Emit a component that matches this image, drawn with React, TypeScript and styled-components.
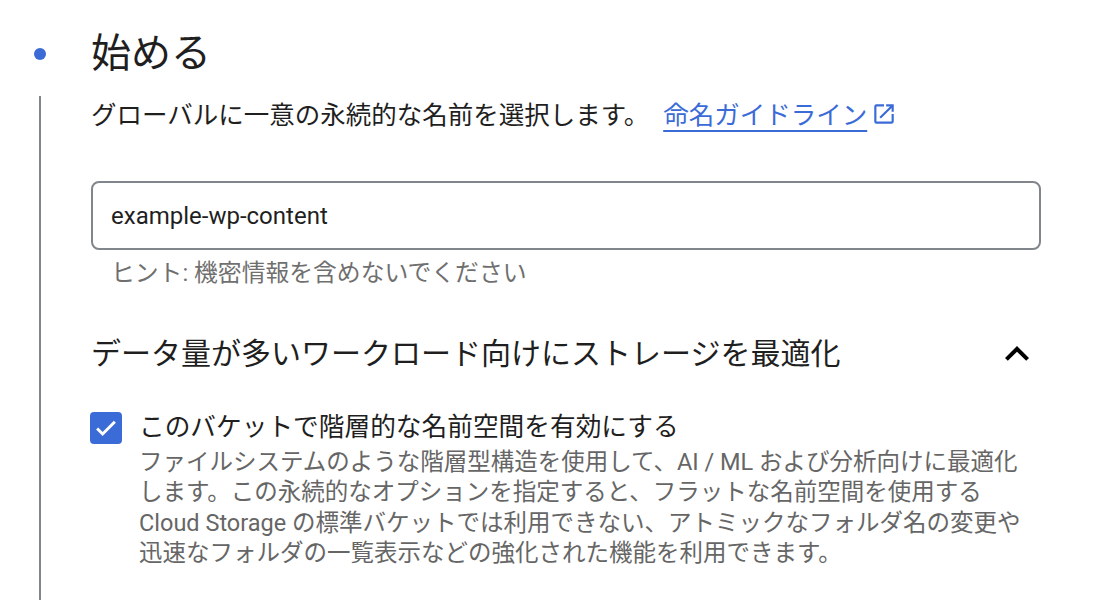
import React from 'react'
import styled, { createGlobalStyle } from 'styled-components'

const GlobalStyle = createGlobalStyle`
  body {
    margin: 0;
    background: #fff;
    font-family: Roboto, "Noto Sans CJK JP", sans-serif;
    color: #1f1f1f;
    overflow: hidden;
  }
`

const App = () => {
  return (
    <>
      <GlobalStyle />
      <Step>
        <Marker>
          <Dot />
        </Marker>
        <Title>始める</Title>
        <RailCell>
          <Rail />
        </RailCell>
        <Content>
          <Desc>
            グローバルに一意の永続的な名前を選択します。
            <GuideLink href="#">
              <LinkText>命名ガイドライン</LinkText>
              <ExternalIcon viewBox="0 0 24 24">
                <path d="M19 19H5V5h7V3H5a2 2 0 0 0-2 2v14a2 2 0 0 0 2 2h14c1.1 0 2-.9 2-2v-7h-2v7zM14 3v2h3.59l-9.830 9.83 1.41 1.41L19 6.41V10h2V3h-7z" />
              </ExternalIcon>
            </GuideLink>
          </Desc>
          <NameInput defaultValue="example-wp-content" />
          <Hint>ヒント: 機密情報を含めないでください</Hint>
          <SectionHeader>
            <SectionTitle>データ量が多いワークロード向けにストレージを最適化</SectionTitle>
            <Chevron viewBox="0 0 24 24">
              <path d="M12 8l-6 6 1.41 1.41L12 10.83l4.59 4.58L18 14z" />
            </Chevron>
          </SectionHeader>
          <CheckRow>
            <Box>
              <svg width="28" height="28" viewBox="0 0 24 24">
                <path d="M4.4 12.4l4.7 4.7L19.6 6.6" fill="none" stroke="#fff" strokeWidth="2.5" />
              </svg>
            </Box>
            <CheckText>
              <CheckLabel>このバケットで階層的な名前空間を有効にする</CheckLabel>
              <CheckDesc>
                ファイルシステムのような階層型構造を使用して、AI / ML および分析向けに最適化
                <br />
                します。この永続的なオプションを指定すると、フラットな名前空間を使用する
                <br />
                Cloud Storage の標準バケットでは利用できない、アトミックなフォルダ名の変更や
                <br />
                迅速なフォルダの一覧表示などの強化された機能を利用できます。
              </CheckDesc>
            </CheckText>
          </CheckRow>
        </Content>
      </Step>
    </>
  )
}

export default App

const Step = styled.section`
  display: grid;
  grid-template-columns: 91px 950px;
  grid-template-rows: auto 1fr;
  height: 100vh;
  overflow: hidden;
`

const Marker = styled.div`
  display: flex;
  align-items: center;
  padding-top: 30px;
  height: 48px;
`

const Dot = styled.div`
  width: 12px;
  height: 12px;
  border-radius: 50%;
  background-color: #3b6bd6;
  margin-left: 34px;
`

const Title = styled.h1`
  margin: 0;
  padding-top: 30px;
  font-size: 40px;
  line-height: 48px;
  font-weight: 400;
  color: #1f1f1f;
`

const RailCell = styled.div`
  padding-top: 18px;
  display: flex;
`

const Rail = styled.div`
  width: 2px;
  margin-left: 39px;
  background-color: #80868b;
`

const Content = styled.div`
  display: flex;
  flex-direction: column;
`

const Desc = styled.p`
  margin: 19px 0 0;
  font-size: 25.5px;
  line-height: 36px;
  color: #1f1f1f;
  white-space: nowrap;
`

const GuideLink = styled.a`
  margin-left: 14px;
  color: #3b6bd6;
  text-decoration: none;
  white-space: nowrap;
`

const LinkText = styled.span`
  text-decoration: underline;
  text-decoration-thickness: 2px;
  text-underline-offset: 6px;
`

const ExternalIcon = styled.svg`
  width: 26px;
  height: 26px;
  fill: #3b6bd6;
  margin-left: 4px;
  vertical-align: -3px;
`

const NameInput = styled.input`
  box-sizing: border-box;
  margin-top: 48px;
  width: 950px;
  height: 69px;
  border: 2px solid #80868b;
  border-radius: 8px;
  padding: 0 18px;
  font-family: Roboto, sans-serif;
  font-size: 24px;
  color: #1f1f1f;
  outline: none;
`

const Hint = styled.div`
  margin-top: 8px;
  padding-left: 20px;
  font-size: 23.8px;
  line-height: 30px;
  color: #6f6f6f;
`

const SectionHeader = styled.div`
  margin-top: 46px;
  display: flex;
  align-items: center;
  justify-content: space-between;
`

const SectionTitle = styled.h2`
  margin: 0;
  font-size: 30px;
  line-height: 40px;
  font-weight: 400;
  color: #1f1f1f;
`

const Chevron = styled.svg`
  width: 48px;
  height: 48px;
  margin: -4px 0 -4px 0;
  fill: #000;
`

const CheckRow = styled.div`
  margin-top: 36px;
  display: flex;
  align-items: flex-start;
  gap: 17px;
`

const Box = styled.div`
  flex: none;
  width: 32px;
  height: 32px;
  margin-top: 2px;
  margin-left: -1px;
  border-radius: 4px;
  background-color: #3b6bd6;
  display: flex;
  align-items: center;
  justify-content: center;
`

const CheckText = styled.div`
  display: flex;
  flex-direction: column;
`

const CheckLabel = styled.div`
  font-size: 25.7px;
  line-height: 34px;
  color: #1f1f1f;
`

const CheckDesc = styled.div`
  margin-top: 3px;
  font-size: 23.5px;
  line-height: 30.3px;
  color: #666;
  white-space: nowrap;
`
